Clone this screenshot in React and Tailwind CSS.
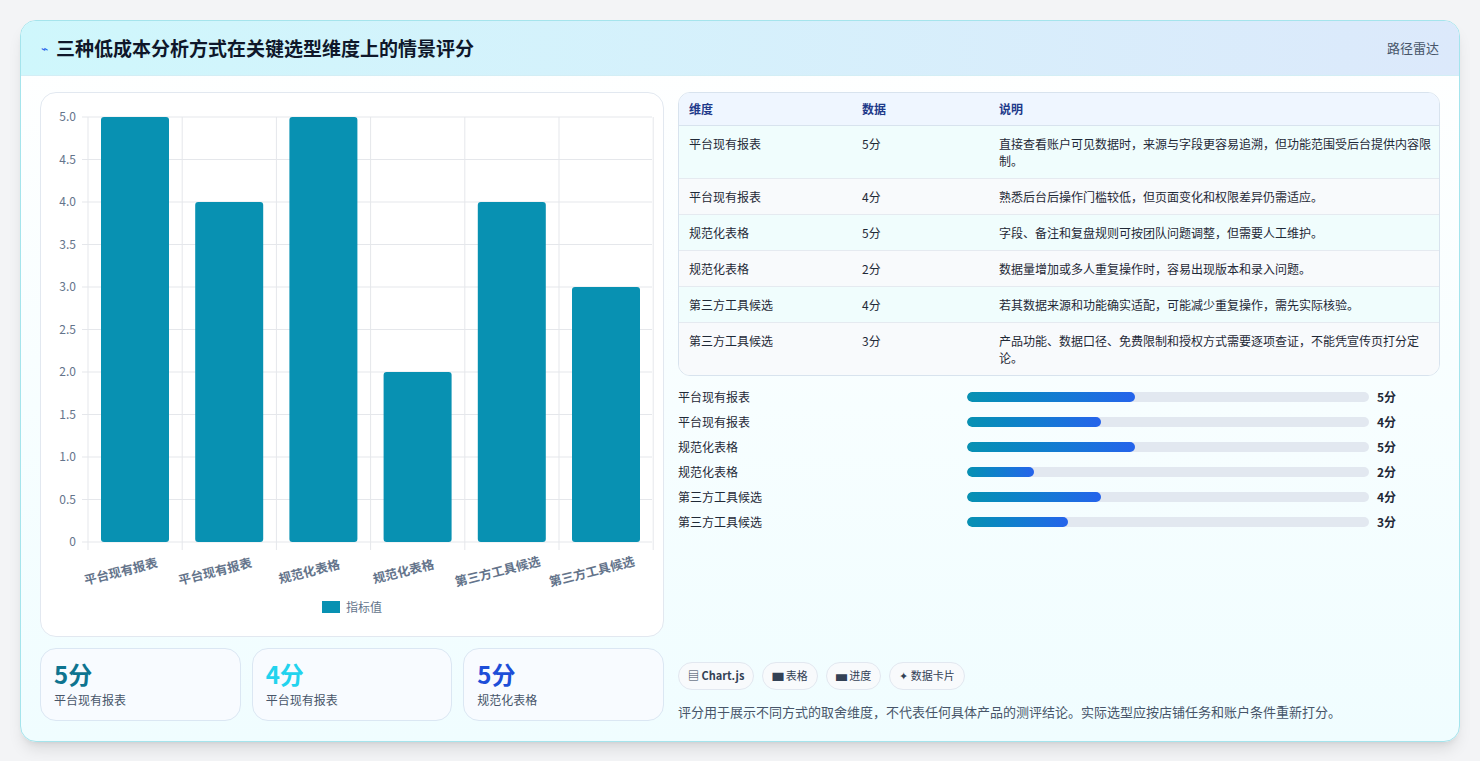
import React from "react";

const data = [
  ["平台现有报表", 5, "直接查看账户可见数据时，来源与字段更容易追溯，但功能范围受后台提供内容限制。"],
  ["平台现有报表", 4, "熟悉后台后操作门槛较低，但页面变化和权限差异仍需适应。"],
  ["规范化表格", 5, "字段、备注和复盘规则可按团队问题调整，但需要人工维护。"],
  ["规范化表格", 2, "数据量增加或多人重复操作时，容易出现版本和录入问题。"],
  ["第三方工具候选", 4, "若其数据来源和功能确实适配，可能减少重复操作，需先实际核验。"],
  ["第三方工具候选", 3, "产品功能、数据口径、免费限制和授权方式需要逐项查证，不能凭宣传页打分定论。"],
];

function Chart() {
  const x0 = 47, y0 = 449, top = 24, slot = 94.2, unit = 85;
  const ticks = [0, 0.5, 1, 1.5, 2, 2.5, 3, 3.5, 4, 4.5, 5];
  return (
    <svg width="624" height="544" className="block">
      {ticks.map((t) => (
        <g key={t}>
          <line x1={x0 - 6} x2={611} y1={y0 - t * unit} y2={y0 - t * unit} stroke="#e5e7eb" />
          <text x={x0 - 12} y={y0 - t * unit + 4} textAnchor="end" fontSize="12" fill="#64748b">{t === 0 ? "0" : t.toFixed(1)}</text>
        </g>
      ))}
      {data.map((d, i) => (
        <line key={"v" + i} x1={x0 + i * slot} x2={x0 + i * slot} y1={top} y2={y0 + 8} stroke="#e5e7eb" />
      ))}
      <line x1={x0 + 6 * slot} x2={x0 + 6 * slot} y1={top} y2={y0 + 8} stroke="#e5e7eb" />
      {data.map((d, i) => (
        <rect key={"b" + i} x={x0 + i * slot + 13} y={y0 - d[1] * unit} width="68" height={d[1] * unit} rx="3" fill="#0891b2" />
      ))}
      {data.map((d, i) => {
        const cx = x0 + i * slot + 47 - 14;
        return (
          <text key={"l" + i} x={cx} y={y0 + 34} textAnchor="middle" fontSize="12.5" fontWeight="700" fill="#64748b" transform={`rotate(-14 ${cx} ${y0 + 30})`}>{d[0]}</text>
        );
      })}
      <rect x="281" y="508" width="18" height="12" fill="#0891b2" />
      <text x="305" y="519" fontSize="12" fill="#64748b">指标值</text>
    </svg>
  );
}

export default function App() {
  return (
    <div className="min-h-[761px] bg-[#f3f4f6] p-5" style={{ fontFamily: '"Noto Sans CJK SC", "Noto Sans", sans-serif' }}>
      <div className="rounded-2xl border border-[#a5e4ec] bg-gradient-to-b from-white to-[#f0fdff] shadow-lg overflow-hidden">
        <div className="h-[55px] flex items-center justify-between px-5 bg-gradient-to-r from-[#cff7fc] to-[#dce9fb] border-b border-[#d3eef5]">
          <div className="flex items-center gap-2">
            <span className="text-[12px] text-[#2563eb]">⌁</span>
            <span className="text-[19px] font-bold text-[#0f172a]">三种低成本分析方式在关键选型维度上的情景评分</span>
          </div>
          <span className="text-[13px] text-[#475569]">路径雷达</span>
        </div>
        <div className="flex gap-[14px] px-[19px] pt-4 pb-5">
          <div className="w-[624px] flex flex-col gap-[11px]">
            <div className="rounded-2xl border border-[#e2e8f0] bg-white h-[545px] overflow-hidden"><Chart /></div>
            <div className="grid grid-cols-3 gap-[11px]">
              {[["5分", "text-[#0e7490]", "平台现有报表"], ["4分", "text-[#22d3ee]", "平台现有报表"], ["5分", "text-[#1d4ed8]", "规范化表格"]].map(([v, c, l], i) => (
                <div key={i} className="h-[73px] rounded-2xl border border-[#dbe7f3] bg-[#f8fbff] px-[13px] pt-[10px]">
                  <div className={`text-[24px] font-bold leading-[30px] ${c}`}>{v}</div>
                  <div className="text-[12px] text-[#475569] mt-[2px]">{l}</div>
                </div>
              ))}
            </div>
          </div>
          <div className="flex-1 flex flex-col">
            <div className="rounded-xl border border-[#d8e3ee] overflow-hidden bg-white">
              <div className="flex h-[33px] items-center bg-[#eff6ff] border-b border-[#d8e3ee] text-[12px] font-bold text-[#1e3a8a]">
                <div className="w-[183px] pl-[10px]">维度</div>
                <div className="w-[137px]">数据</div>
                <div>说明</div>
              </div>
              {data.map((d, i) => (
                <div key={i} className={`flex py-[9px] text-[12px] text-[#1f2937] border-b border-[#e5eaf0] last:border-b-0 leading-[17px] ${i % 2 ? "bg-[#f8fafc]" : "bg-[#f0fdfd]"}`}>
                  <div className="w-[183px] pl-[10px] shrink-0">{d[0]}</div>
                  <div className="w-[137px] shrink-0">{d[1]}分</div>
                  <div className="flex-1 pr-2">{d[2]}</div>
                </div>
              ))}
            </div>
            <div className="flex flex-col gap-[7px] mt-[12px]">
              {data.map((d, i) => (
                <div key={i} className="flex items-center h-[18px] text-[12px]">
                  <div className="w-[289px] text-[#1f2937]">{d[0]}</div>
                  <div className="w-[402px] h-[10px] rounded-full bg-[#e2e8f0] overflow-hidden">
                    <div className="h-full rounded-full bg-gradient-to-r from-[#0891b2] to-[#2563eb]" style={{ width: `${(d[1] / 12) * 100}%` }} />
                  </div>
                  <div className="ml-2 font-bold text-[#1f2937]">{d[1]}分</div>
                </div>
              ))}
            </div>
            <div className="flex-1" />
            <div className="flex gap-2 text-[11px] text-[#334155]">
              {["▤ Chart.js", "▆ 表格", "▅ 进度", "✦ 数据卡片"].map((t, i) => (
                <span key={i} className={`h-[28px] px-[9px] flex items-center rounded-full border border-[#e2e8f0] bg-[#f8fafc] ${i === 0 ? "font-bold" : ""}`}>{t}</span>
              ))}
            </div>
            <div className="mt-[12px] text-[13px] text-[#475569]">评分用于展示不同方式的取舍维度，不代表任何具体产品的测评结论。实际选型应按店铺任务和账户条件重新打分。</div>
          </div>
        </div>
      </div>
    </div>
  );
}
